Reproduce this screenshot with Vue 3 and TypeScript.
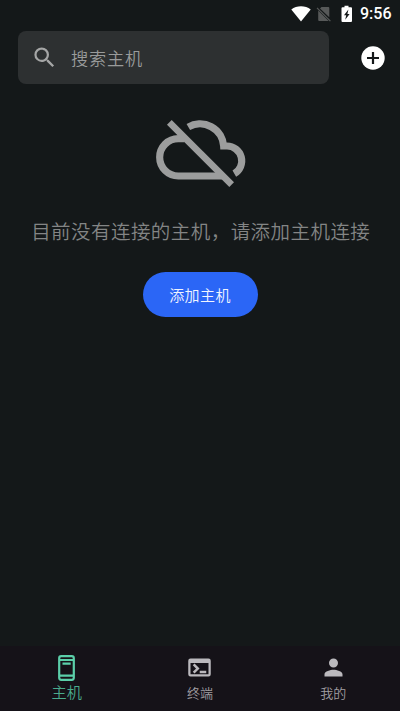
<script setup lang="ts">
import { ref } from 'vue'

type TabId = 'host' | 'terminal' | 'mine'

const tabs: { id: TabId; label: string }[] = [
  { id: 'host', label: '主机' },
  { id: 'terminal', label: '终端' },
  { id: 'mine', label: '我的' },
]
const active = ref<TabId>('host')
const query = ref('')
</script>

<template>
  <div class="screen">
    <header class="status">
      <svg class="wifi" viewBox="0 0 20 16"><path d="M10 15.6 0.3 3.6C3 1.4 6.400 0.300 10 0.300s7 1.100 9.700 3.300z" /></svg>
      <svg class="sim" viewBox="0 0 16 16">
        <path d="M5.500 1H12.300a1 1 0 0 1 1 1V11.300L4 2.500zM2.200 4.600 12.700 15H3.200a1 1 0 0 1-1-1z" />
        <path class="slash" d="M1 1.800 14.400 15.200" />
      </svg>
      <svg class="battery" viewBox="0 0 12 18">
        <path fill-rule="evenodd" d="M3.500 0.700h4v1.600H10a1 1 0 0 1 1 1V16a1 1 0 0 1-1 1H1.500a1 1 0 0 1-1-1V3.300a1 1 0 0 1 1-1h2zM7.400 4.500 3 10.200h2.200L4.200 14.700 8.600 9H6.400z" />
      </svg>
      <span class="clock">9:56</span>
    </header>

    <div class="toolbar">
      <label class="search">
        <svg viewBox="0 0 24 24"><path d="M15.500 14h-.79l-.28-.27A6.471 6.471 0 0 0 16 9.500 6.500 6.500 0 1 0 9.500 16c1.610 0 3.090-.59 4.230-1.570l.27.28v.79l5 4.990L20.490 19l-4.990-5zm-6 0C7.010 14 5 11.990 5 9.500S7.010 5 9.500 5 14 7.010 14 9.500 11.990 14 9.500 14z" /></svg>
        <input v-model="query" placeholder="搜索主机" />
      </label>
      <button class="add" type="button">
        <svg viewBox="0 0 24 24">
          <circle cx="12" cy="12" r="11.700" />
          <path d="M12 6v12M6 12h12" />
        </svg>
      </button>
    </div>

    <main class="empty">
      <svg class="cloud" viewBox="45 40 275 210">
        <path d="M145 67A71 71 0 0 1 251 124H261A44.500 44.500 0 0 1 283 207" />
        <path d="M133 102H115A56 56 0 0 0 115 214H249" />
        <path class="strike" d="M88 53 275 240" />
      </svg>
      <p>目前没有连接的主机，请添加主机连接</p>
      <button class="primary" type="button">添加主机</button>
    </main>

    <nav class="tabs">
      <button v-for="tab in tabs" :key="tab.id" type="button" :class="['tab', { active: active === tab.id }]" @click="active = tab.id">
        <svg v-if="tab.id === 'host'" class="host" viewBox="0 0 17 26">
          <rect x="1.200" y="1.200" width="14.600" height="23.600" rx="2" />
          <path d="M1 5H16M1 20.700H16M4.500 8.700H12.700" />
        </svg>
        <svg v-else-if="tab.id === 'terminal'" class="icon" viewBox="0 0 24 24">
          <path d="M20 4H4a2 2 0 0 0-2 2v12a2 2 0 0 0 2 2h16a2 2 0 0 0 2-2V6a2 2 0 0 0-2-2zm0 14H4V8h16z" />
          <path class="prompt" d="M6.800 9.200 10.500 12.900 6.800 16.600M12.200 16H18" />
        </svg>
        <svg v-else class="icon" viewBox="0 0 24 24">
          <path d="M12 12a4 4 0 1 0 0-8 4 4 0 0 0 0 8zm0 2c-2.670 0-8 1.340-8 4v2h16v-2c0-2.660-5.330-4-8-4z" />
        </svg>
        <span>{{ tab.label }}</span>
      </button>
    </nav>
  </div>
</template>

<style>
body {
  background: #141819;
}
</style>

<style scoped>
.screen {
  display: flex;
  flex-direction: column;
  height: 711px;
  background: #141819;
  font-family: 'Noto Sans CJK SC', sans-serif;
  font-weight: 350;
  overflow: hidden;
}
svg {
  display: block;
  flex: none;
}
button {
  padding: 0;
  border: 0;
  background: none;
  font: inherit;
}
.status {
  display: flex;
  align-items: center;
  height: 27px;
  padding-left: 290.5px;
  box-sizing: border-box;
  fill: #fff;
}
.wifi {
  width: 20px;
  height: 16px;
}
.sim {
  width: 16px;
  height: 16px;
  margin-left: 5.5px;
  fill: #575959;
}
.slash {
  stroke: #575959;
  stroke-width: 1.2;
}
.battery {
  width: 12px;
  height: 18px;
  margin-left: 9px;
}
.clock {
  margin-left: 7px;
  color: #fff;
  font: 500 16px/27px Roboto, sans-serif;
}
.toolbar {
  display: flex;
  align-items: center;
  justify-content: space-between;
  padding: 4px 15px 0 18px;
}
.search {
  display: flex;
  align-items: center;
  width: 311px;
  height: 53px;
  padding-left: 12.5px;
  box-sizing: border-box;
  border-radius: 8px;
  background: #2d3031;
}
.search svg {
  width: 27px;
  height: 27px;
  fill: #a5a6a6;
}
.search input {
  width: 220px;
  margin-left: 13.5px;
  padding: 0;
  border: 0;
  outline: 0;
  background: none;
  color: #ddd;
  font: inherit;
  font-size: 17.2px;
  letter-spacing: 0.8px;
}
.search input::placeholder {
  color: #999b9b;
  opacity: 1;
}
.add svg {
  width: 24px;
  height: 24px;
  fill: #fff;
}
.add path {
  stroke: #141819;
  stroke-width: 2.2;
}
.empty {
  display: flex;
  flex: 1;
  flex-direction: column;
  align-items: center;
  padding-top: 34.3px;
}
.cloud {
  width: 91.67px;
  height: 70px;
  margin-left: 1.6px;
  fill: none;
  stroke: #9c9d9d;
  stroke-width: 21.5;
}
.strike {
  stroke-width: 20;
}
.empty p {
  margin: 27.7px 0 0 1.5px;
  color: #838585;
  font-size: 19.5px;
  line-height: 30px;
  letter-spacing: 0.45px;
  white-space: nowrap;
}
.primary {
  width: 115px;
  height: 44.5px;
  margin-top: 26.5px;
  border-radius: 23px;
  background: #2b66f6;
  color: #f0f4ff;
  font-size: 15px;
  letter-spacing: 0.4px;
}
.tabs {
  display: flex;
  height: 65px;
  background: #151218;
}
.tab {
  display: flex;
  flex: 1;
  flex-direction: column;
  align-items: center;
  color: #a19fa3;
  font-size: 13px;
}
.tab span {
  line-height: 20px;
}
.icon {
  width: 27px;
  height: 27px;
  margin-top: 8.3px;
  fill: #bbb9bd;
}
.icon + span {
  margin-top: 1.7px;
}
.prompt {
  fill: none;
  stroke: #bbb9bd;
  stroke-width: 2.2;
}
.host {
  width: 17px;
  height: 26px;
  margin-top: 9px;
  fill: none;
  stroke: #5bcfa9;
  stroke-width: 2.2;
}
.active {
  color: #4aaa8c;
  font-size: 15.2px;
}
</style>
